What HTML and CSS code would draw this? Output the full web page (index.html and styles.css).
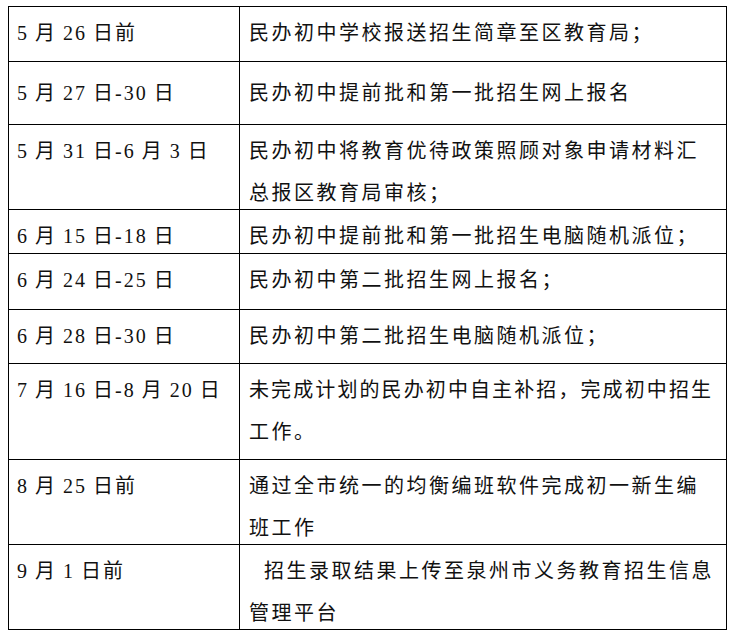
FILE: index.html
```html
<!DOCTYPE html>
<html lang="zh-CN">
<head>
<meta charset="utf-8">
<link rel="stylesheet" href="styles.css">
</head>
<body>
<div class="sched">
  <div class="c d">5 月 26 日前</div>
  <div class="c t"><span class="ln">民办初中学校报送招生简章至区教育局；</span></div>

  <div class="c d low">5 月 27 日-30 日</div>
  <div class="c t low"><span class="ln">民办初中提前批和第一批招生网上报名</span></div>

  <div class="c d">5 月 31 日-6 月 3 日</div>
  <div class="c t"><span class="ln">民办初中将教育优待政策照顾对象申请材料汇</span><span class="ln">总报区教育局审核；</span></div>

  <div class="c d">6 月 15 日-18 日</div>
  <div class="c t"><span class="ln">民办初中提前批和第一批招生电脑随机派位；</span></div>

  <div class="c d">6 月 24 日-25 日</div>
  <div class="c t"><span class="ln">民办初中第二批招生网上报名；</span></div>

  <div class="c d">6 月 28 日-30 日</div>
  <div class="c t"><span class="ln">民办初中第二批招生电脑随机派位；</span></div>

  <div class="c d">7 月 16 日-8 月 20 日</div>
  <div class="c t"><span class="ln tight">未完成计划的民办初中自主补招，完成初中招生</span><span class="ln">工作。</span></div>

  <div class="c d">8 月 25 日前</div>
  <div class="c t"><span class="ln">通过全市统一的均衡编班软件完成初一新生编</span><span class="ln">班工作</span></div>

  <div class="c d">9 月 1 日前</div>
  <div class="c t"><span class="ln indent">招生录取结果上传至泉州市义务教育招生信息</span><span class="ln">管理平台</span></div>
</div>
</body>
</html>
```

FILE: styles.css
```css
html, body {
  margin: 0;
  padding: 0;
  background: #ffffff;
}
body {
  padding: 6px 0 0 8px;
}
.sched {
  display: grid;
  grid-template-columns: 231px 487px;
  grid-template-rows: 55px 63px 85px 44px 56px 54px 96px 85px 85px;
  width: 718px;
  border-left: 1px solid #000;
  border-top: 1px solid #000;
  font-family: "Liberation Serif", "Noto Sans CJK SC", serif;
  font-size: 20px;
  line-height: 42px;
  color: #111;
  letter-spacing: 2.5px;
}
.c {
  box-sizing: border-box;
  border-right: 1px solid #000;
  border-bottom: 1px solid #000;
  padding-top: 5px;
  white-space: nowrap;
  overflow: hidden;
}
.d {
  padding-left: 8px;
  letter-spacing: 2px;
  word-spacing: -1px;
}
.t {
  padding-left: 9px;
}
.low {
  padding-top: 10px;
}
.ln {
  display: block;
}
.tight {
  letter-spacing: 2.1px;
}
.indent {
  padding-left: 15px;
}
```
